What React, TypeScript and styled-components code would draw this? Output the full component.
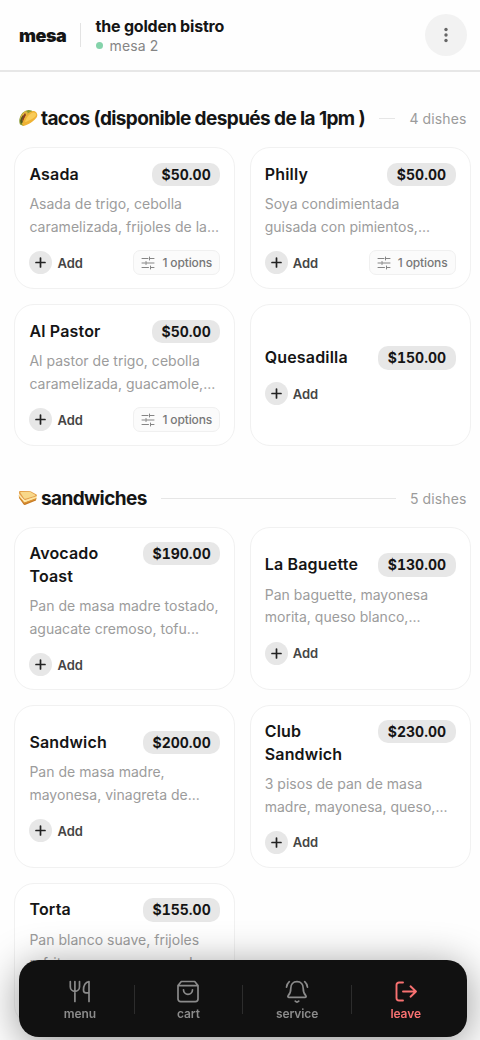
import React from "react";
import styled, { createGlobalStyle } from "styled-components";

const Global = createGlobalStyle`
  *{box-sizing:border-box}
  html,body{margin:0;padding:0;background:#fefefe}
  body{height:1040px;overflow:hidden;font-family:Inter,"Liberation Sans",sans-serif;color:#151515}
  button{font-family:inherit;border:0;margin:0;padding:0;background:none}
`;
const Page = styled.div`
  width:480px;height:1040px;overflow:hidden;background:#fefefe;
`;
const Header = styled.header`
  height:72px;display:flex;align-items:center;padding:0 13.5px 0 19px;
  border-bottom:2px solid #e7e7e7;
`;
const Logo = styled.div`
  width:48px;font-size:18px;font-weight:900;letter-spacing:-0.5px;line-height:24px;white-space:nowrap;padding-top:1px;
`;
const Divider = styled.i`
  width:1px;height:24px;background:#e3e3e3;margin:0 14.5px 0 13px;
`;
const Place = styled.div`
  flex:1;display:flex;flex-direction:column;padding-top:2px;
`;
const PlaceName = styled.div`
  font-size:16px;font-weight:700;line-height:19px;letter-spacing:-0.2px;
`;
const Table = styled.div`
  display:flex;align-items:center;gap:7px;font-size:14px;line-height:20px;letter-spacing:0.15px;color:#858585;
`;
const Dot = styled.i`
  width:7px;height:7px;border-radius:50%;background:#84d3aa;
`;
const MoreButton = styled.button`
  width:42px;height:42px;border-radius:50%;background:#f2f2f2;display:grid;place-items:center;
`;
const Section = styled.section<{ $top: number }>`
  padding:${p => p.$top}px 9.5px 0 14.4px;
`;
const SectionHead = styled.div`
  height:28px;display:flex;align-items:center;padding:0 4px 0 4px;
`;
const Title = styled.h2`
  margin:0 14px 0 2.6px;font-size:19px;font-weight:700;letter-spacing:-0.6px;line-height:28px;padding-top:1px;white-space:nowrap;
`;
const Rule = styled.i`
  flex:1;height:1px;background:#e6e6e6;
`;
const Count = styled.span`
  margin-left:14px;font-size:14px;letter-spacing:0.12px;color:#9b9b9b;white-space:nowrap;
`;
const Grid = styled.div`
  margin-top:15px;display:grid;grid-template-columns:repeat(2,minmax(0,1fr));gap:15px 14.5px;
`;
const Card = styled.article<{ $h: number }>`
  height:${p => p.$h}px;border:1px solid #f1f1f1;border-radius:20px;padding:1px 14px 0;background:#fff;
  display:flex;flex-direction:column;justify-content:center;
`;
const CardTop = styled.div`
  display:flex;justify-content:space-between;align-items:flex-start;
`;
const Name = styled.h3`
  margin:0;font-size:16px;line-height:23.2px;font-weight:600;letter-spacing:0.18px;white-space:pre-line;
`;
const Price = styled.span`
  height:23.5px;padding:0 9.5px;border-radius:10px;background:#e7e7e7;
  font-size:14px;font-weight:700;line-height:23.5px;font-variant-numeric:tabular-nums;
`;
const Desc = styled.p`
  margin:7px 0 0;font-size:14px;line-height:22.7px;letter-spacing:0.02px;color:#9c9c9c;white-space:pre;
`;
const CardFoot = styled.div`
  margin-top:12px;display:flex;align-items:center;justify-content:space-between;height:24px;
`;
const Add = styled.button`
  display:flex;align-items:center;gap:5px;font-size:13px;font-weight:600;color:#454545;
`;
const AddIcon = styled.span`
  width:23px;height:23px;border-radius:50%;background:#e7e7e7;display:grid;place-items:center;
`;
const Options = styled.span`
  height:25px;padding:0 7px 0 7px;display:flex;align-items:center;gap:7px;
  border:1px solid #f0f0f0;border-radius:7px;background:#fbfbfb;
  font-size:12px;font-weight:500;letter-spacing:-0.12px;color:#777;white-space:nowrap;
`;
const Nav = styled.nav`
  position:fixed;left:19px;top:960px;width:447.5px;height:77px;border-radius:20px;background:#111;
  display:flex;align-items:center;padding:2px 7px 0;
  box-shadow:0 6px 40px rgba(0,0,0,.42);
`;
const NavItem = styled.button<{ $danger?: boolean }>`
  flex:1;display:flex;flex-direction:column;align-items:center;gap:1px;padding-top:3px;
  color:${p => (p.$danger ? "#f87171" : "#8b8b8b")};
  font-size:12px;font-weight:600;line-height:17px;letter-spacing:-0.1px;
  svg{display:block}
`;
const NavSplit = styled.i`
  width:1px;height:29px;background:#2d2d2d;
`;

const Taco = () => (
  <svg width="20" height="20" viewBox="0 0 20 20">
    <path d="M2 16.5C-.3 12 3 3.200 9.500 2.200c3-.5 5 1 5 1L5.500 18z" fill="#8a9a32" />
    <path d="M2 13.500c-.5-4 2-9 6-10.500l2 2-5 12z" fill="#e3b640" />
    <path d="M3 10l2-3 1 2-2 3 1 2-2 2-1-3z" fill="#4d5d20" />
    <path d="M5 8l2-3 1 2-2 4-1 3-1-2z" fill="#8c3e20" />
    <path d="M4.700 17.500C5 11 9 4.500 14 3.200c3-.7 5.500 1.600 5.300 4.300-.2 3.600-7.300 8.500-13 10.300-.9.300-1.600.3-1.600-.3z" fill="#efb335" />
    <path d="M7 14c1-4 4-8 7.500-9.300 2-.7 3.600.4 3.600 2C18 9 12 12.500 7 14z" fill="#f9cc58" />
  </svg>
);
const Bread = () => (
  <svg width="20" height="20" viewBox="0 0 20 20">
    <path d="M.8 7l5.200 7.500L18 10.300v2.200L7.500 16.800c-.9.400-1.700.1-2.200-.7L1 10z" fill="#c57a25" />
    <path d="M1 6l5 6.500L18.700 8v2.300L6.500 14.500 1 8.300z" fill="#ffe7a0" />
    <path d="M1 8.300l5.500 6.200L18.500 10v1.200L6.500 15.700 1 9.500z" fill="#dd9333" />
    <path d="M1 4.500c-.2-.9.300-1.500 1.200-1.500L11 2.900c1 0 1.800.2 2.500.8l5 2.900c.8.600.5 1.700-.5 2L7.500 12c-.8.200-1.500 0-2-.7L1.200 6z" fill="#e3a04a" />
    <path d="M2.200 4.600c0-.5.500-.7 1-.7l7.800-.1c.7 0 1.300.1 1.800.5l4.200 2.500c.5.400.3 1-.3 1.200l-9.100 2.700c-.6.200-1.200 0-1.600-.5z" fill="#f8d88a" />
  </svg>
);
const Plus = () => (
  <svg width="11" height="11" viewBox="0 0 11 11" fill="none" stroke="#222" strokeWidth="1.7" strokeLinecap="round">
    <path d="M5.500 1v9M1 5.500h9" />
  </svg>
);
const Sliders = () => (
  <svg width="14" height="14" viewBox="0 0 14 14" fill="none" stroke="#858585" strokeWidth="1" strokeLinecap="round">
    <path d="M1 2.500h6M8.500 2.500H13M8.500 1v3M1 7h3M5 7h8M5 5.500v3M1 11.500h6.500M9.500 11.500H13M9.500 10v3" />
  </svg>
);

const iconProps = {
  width: 24, height: 24, viewBox: "0 0 24 24", fill: "none", stroke: "currentColor",
  strokeWidth: 1.7, strokeLinecap: "round" as const, strokeLinejoin: "round" as const,
};
const MenuIcon = () => (
  <svg {...iconProps}>
    <path d="M2.300 1.500v5.200a4.600 4.600 0 0 0 9.200 0V1.500M6.900 1.500v20M21 21.500V1.500c-3.500.8-5.500 4-5.500 8.500 0 1.900.8 2.900 2.500 2.900h3" />
  </svg>
);
const CartIcon = () => (
  <svg {...iconProps}>
    <path d="M5.300 1.500h13.400L22 5.500v13.500a2.600 2.600 0 0 1-2.600 2.600H4.600A2.600 2.600 0 0 1 2 19V5.500zM2 5.600h20M7.500 9.800a4.500 4.500 0 0 0 9 0" />
  </svg>
);
const BellIcon = () => (
  <svg {...iconProps}>
    <path d="M12 1.700c-4 0-6.200 2.800-6.200 6.500 0 4.200-1.200 6-2.600 7.500-.6.700-.2 1.600.8 1.600h16c1 0 1.400-.9.800-1.600-1.400-1.500-2.600-3.300-2.600-7.500 0-3.700-2.200-6.500-6.200-6.500zM10.300 21.200c.9.900 2.500.9 3.400 0M4.300 1.700C2.700 3.100 1.700 4.900 1.500 7.200M19.700 1.700c1.600 1.400 2.600 3.200 2.800 5.500" />
  </svg>
);
const LeaveIcon = () => (
  <svg {...iconProps} strokeWidth={1.9}>
    <path d="M9 2.500H5A2.500 2.500 0 0 0 2.500 5v13A2.500 2.500 0 0 0 5 20.500h4M9 11.500h13M16.500 6.300L22 11.500l-5.500 5.200" />
  </svg>
);

type Dish = { name: string; price: string; desc?: string; options?: boolean; h: number };
const tacos: Dish[] = [
  { name: "Asada", price: "$50.00", desc: "Asada de trigo, cebolla\ncaramelizada, frijoles de la...", options: true, h: 142.2 },
  { name: "Philly", price: "$50.00", desc: "Soya condimientada\nguisada con pimientos,...", options: true, h: 142.2 },
  { name: "Al Pastor", price: "$50.00", desc: "Al pastor de trigo, cebolla\ncaramelizada, guacamole,...", options: true, h: 142.2 },
  { name: "Quesadilla", price: "$150.00", h: 142.2 },
];
const sandwiches: Dish[] = [
  { name: "Avocado\nToast", price: "$190.00", desc: "Pan de masa madre tostado,\naguacate cremoso, tofu...", h: 162.7 },
  { name: "La Baguette", price: "$130.00", desc: "Pan baguette, mayonesa\nmorita, queso blanco,...", h: 162.7 },
  { name: "Sandwich", price: "$200.00", desc: "Pan de masa madre,\nmayonesa, vinagreta de...", h: 162.7 },
  { name: "Club\nSandwich", price: "$230.00", desc: "3 pisos de pan de masa\nmadre, mayonesa, queso,...", h: 162.7 },
  { name: "Torta", price: "$155.00", desc: "Pan blanco suave, frijoles\nrefritos, mayonesa, asada...", h: 142 },
];

const DishCard = ({ d }: { d: Dish }) => (
  <Card $h={d.h}>
    <CardTop><Name>{d.name}</Name><Price>{d.price}</Price></CardTop>
    {d.desc && <Desc>{d.desc}</Desc>}
    <CardFoot>
      <Add><AddIcon><Plus /></AddIcon>Add</Add>
      {d.options && <Options><Sliders />1 options</Options>}
    </CardFoot>
  </Card>
);

export default function App() {
  return (
    <Page>
      <Global />
      <Header>
        <Logo>mesa</Logo>
        <Divider />
        <Place>
          <PlaceName>the golden bistro</PlaceName>
          <Table><Dot />mesa 2</Table>
        </Place>
        <MoreButton aria-label="More">
          <svg width="16" height="16" viewBox="0 0 16 16" fill="#666">
            <circle cx="8" cy="2.500" r="1.700" /><circle cx="8" cy="8" r="1.700" /><circle cx="8" cy="13.500" r="1.700" />
          </svg>
        </MoreButton>
      </Header>
      <Section $top={32}>
        <SectionHead><Taco /><Title>tacos (disponible después de la 1pm )</Title><Rule /><Count>4 dishes</Count></SectionHead>
        <Grid>{tacos.map(d => <DishCard key={d.name} d={d} />)}</Grid>
      </Section>
      <Section $top={38}>
        <SectionHead><Bread /><Title>sandwiches</Title><Rule /><Count>5 dishes</Count></SectionHead>
        <Grid>{sandwiches.map(d => <DishCard key={d.name} d={d} />)}</Grid>
      </Section>
      <Nav>
        <NavItem><MenuIcon />menu</NavItem>
        <NavSplit />
        <NavItem><CartIcon />cart</NavItem>
        <NavSplit />
        <NavItem><BellIcon />service</NavItem>
        <NavSplit />
        <NavItem $danger><LeaveIcon />leave</NavItem>
      </Nav>
    </Page>
  );
}
